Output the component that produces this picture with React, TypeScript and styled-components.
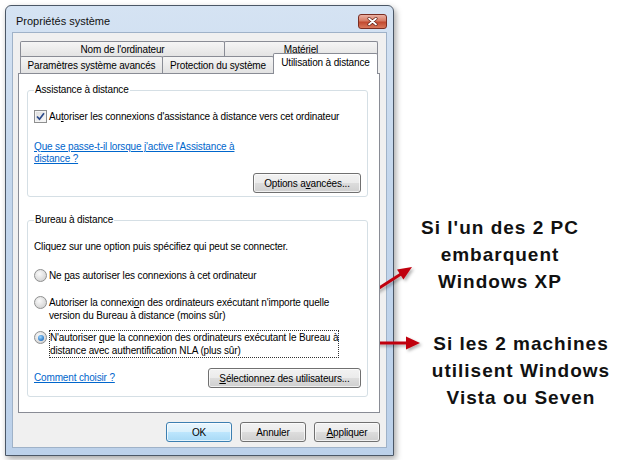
import React from 'react'
import styled, { createGlobalStyle } from 'styled-components'

const RED = '#c0000f'

const GlobalStyle = createGlobalStyle`
  html, body {
    margin: 0;
    padding: 0;
    background: #fff;
  }
  body {
    width: 623px;
    height: 460px;
    overflow: hidden;
    font-family: 'Liberation Sans', Arial, sans-serif;
  }
`

export default function App() {
  return (
    <Page>
      <GlobalStyle />
      <Window>
        <TitleBar>
          <Title>Propriétés système</Title>
          <CloseButton>
            <svg width="11" height="9" viewBox="0 0 11 9">
              <path d="M2 1.5 L9 7.5 M9 1.5 L2 7.5" stroke="#5a1a10" strokeWidth="3" strokeLinecap="round" />
              <path d="M2 1.5 L9 7.5 M9 1.5 L2 7.5" stroke="#fff" strokeWidth="1.8" strokeLinecap="round" />
            </svg>
          </CloseButton>
        </TitleBar>

        <Client>
          <TabArea>
            <TabRow>
              <Tab $width={205}>Nom de l'ordinateur</Tab>
              <Tab $grow>Matériel</Tab>
            </TabRow>
            <FrontRow>
              <Tab $width={143}>Paramètres système avancés</Tab>
              <Tab $width={112}>Protection du système</Tab>
              <Tab $grow $selected>Utilisation à distance</Tab>
            </FrontRow>
          </TabArea>

          <Panel>
            <Group $bottom={3}>
              <Legend>Assistance à distance</Legend>
              <OptionRow $top={14}>
                <CheckBox>
                  <svg width="9" height="9" viewBox="0 0 9 9">
                    <path d="M1 4.5 L3.5 7.2 L8 1.2" fill="none" stroke="#2b4a8a" strokeWidth="1.7" />
                  </svg>
                </CheckBox>
                <Label>
                  Au<u>t</u>oriser les connexions d'assistance à distance vers cet ordinateur
                </Label>
              </OptionRow>
              <Link $top={18}>
                Que se passe-t-il lorsque j'active l'Assistance à
                <br />
                distance ?
              </Link>
              <ActionRow $top={8}>
                <Button $width={108}>
                  Options a<u>v</u>ancées...
                </Button>
              </ActionRow>
            </Group>

            <Group $bottom={8} $top={17}>
              <Legend>Bureau à distance</Legend>
              <Intro>Cliquez sur une option puis spécifiez qui peut se connecter.</Intro>
              <OptionRow $top={16}>
                <Radio />
                <Label>
                  Ne <u>p</u>as autoriser les connexions à cet ordinateur
                </Label>
              </OptionRow>
              <OptionRow $top={14}>
                <Radio />
                <Label>
                  Autoriser la connexi<u>o</u>n des ordinateurs exécutant n'importe quelle
                  <br />
                  version du Bureau à distance (moins sûr)
                </Label>
              </OptionRow>
              <OptionRow $top={9}>
                <Radio $checked />
                <Label $focused>
                  N'autoriser <u>q</u>ue la connexion des ordinateurs exécutant le Bureau à
                  <br />
                  distance avec authentification NLA (plus sûr)
                </Label>
              </OptionRow>
              <ActionRow $top={11} $split>
                <Link>Comment choisir ?</Link>
                <Button $width={153}>
                  <u>S</u>électionnez des utilisateurs...
                </Button>
              </ActionRow>
            </Group>
          </Panel>

          <DialogButtons>
            <Button $width={66} $default>
              OK
            </Button>
            <Button $width={66}>Annuler</Button>
            <Button $width={66}>
              <u>A</u>ppliquer
            </Button>
          </DialogButtons>
        </Client>
      </Window>

      <Notes>
        <Note $left={6}>
          Si l'un des 2 PC
          <br />
          embarquent
          <br />
          Windows XP
        </Note>
        <Note $left={27} $top={35}>
          Si les 2 machines
          <br />
          utilisent Windows
          <br />
          Vista ou Seven
        </Note>
      </Notes>

      <Highlight style={{ left: 28, top: 80, width: 324, height: 52 }} />
      <Highlight style={{ left: 28, top: 293, width: 311, height: 30 }} />
      <Highlight style={{ left: 25, top: 326, width: 326, height: 36 }} />

      <Arrows width="623" height="460" viewBox="0 0 623 460">
        <defs>
          <filter id="arrowShadow" x="-20%" y="-20%" width="140%" height="140%">
            <feDropShadow dx="2" dy="2" stdDeviation="1.5" floodColor="#000" floodOpacity="0.3" />
          </filter>
        </defs>
        <g filter="url(#arrowShadow)" fill={RED} stroke={RED}>
          <line x1="351" y1="306" x2="401" y2="274" strokeWidth="3" />
          <polygon points="412,267 403.4,279.6 397,269.4" stroke="none" />
          <line x1="361" y1="343" x2="408" y2="343" strokeWidth="3" />
          <polygon points="420,343 406,336.5 406,349.5" stroke="none" />
        </g>
      </Arrows>
    </Page>
  )
}

const Page = styled.div`
  position: relative;
  display: flex;
  width: 623px;
  height: 460px;
`

const Window = styled.div`
  box-sizing: border-box;
  display: flex;
  flex-direction: column;
  margin: 5px 0 0 5px;
  width: 389px;
  height: 451px;
  border: 1px solid #4b5766;
  border-radius: 6px 6px 0 0;
  background: linear-gradient(#d5e3f3, #c3d6ec 40%, #bcd1ea);
  box-shadow: 2px 3px 6px rgba(0, 0, 0, 0.35);
`

const TitleBar = styled.div`
  display: flex;
  align-items: center;
  justify-content: space-between;
  height: 26px;
  padding: 4px 6px 0 10px;
  box-sizing: border-box;
`

const Title = styled.div`
  font-size: 11px;
  color: #111;
`

const CloseButton = styled.div`
  display: flex;
  align-items: center;
  justify-content: center;
  width: 29px;
  height: 15px;
  box-sizing: border-box;
  border: 1px solid #7a2d22;
  border-radius: 3px;
  background: linear-gradient(#eab1a4, #d77b64 45%, #c24a30 55%, #d9785c);
`

const Client = styled.div`
  display: flex;
  flex-direction: column;
  box-sizing: border-box;
  flex: 1;
  margin: 0 6px 7px 6px;
  padding: 8px 6px 0 5px;
  background: #f0f0f0;
  border: 1px solid #9fb2c8;
`

const TabArea = styled.div`
  display: flex;
  flex-direction: column;
  padding: 0 2px;
`

const TabRow = styled.div`
  display: flex;
  height: 16px;
`

const FrontRow = styled.div`
  display: flex;
  align-items: flex-end;
  height: 20px;
  margin-top: -4px;
`

const Tab = styled.div<{ $width?: number; $grow?: boolean; $selected?: boolean }>`
  position: relative;
  box-sizing: border-box;
  display: flex;
  align-items: center;
  justify-content: center;
  ${({ $width }) => ($width ? `width: ${$width}px;` : '')}
  ${({ $grow }) => ($grow ? 'flex: 1;' : '')}
  height: ${({ $selected }) => ($selected ? '21px' : '100%')};
  margin-left: -1px;
  &:first-child {
    margin-left: 0;
  }
  ${({ $selected }) => ($selected ? 'margin-bottom: -1px; z-index: 2; padding-bottom: 3px;' : 'max-height: 17px;')}
  border: 1px solid #898c95;
  border-bottom: none;
  border-radius: 2px 2px 0 0;
  background: ${({ $selected }) => ($selected ? '#fff' : 'linear-gradient(#f5f5f5, #e2e2e2)')};
  font-size: 10px;
  letter-spacing: -0.15px;
  color: #000;
  white-space: nowrap;
`

const Panel = styled.div`
  position: relative;
  z-index: 1;
  box-sizing: border-box;
  height: 340px;
  padding: 10px 11px 0 8px;
  border: 1px solid #898c95;
  background: #fff;
`

const Group = styled.fieldset<{ $top?: number; $bottom: number }>`
  display: flex;
  flex-direction: column;
  margin: ${({ $top }) => $top || 0}px 0 0 0;
  padding: 0 6px ${({ $bottom }) => $bottom}px 6px;
  min-width: 0;
  border: 1px solid #d5dfe5;
  border-radius: 3px;
`

const Legend = styled.legend`
  padding: 0 1px;
  font-size: 10px;
  letter-spacing: -0.15px;
  line-height: 12px;
  color: #000;
`

const OptionRow = styled.div<{ $top: number }>`
  display: flex;
  align-items: flex-start;
  gap: 2px;
  margin-top: ${({ $top }) => $top}px;
`

const CheckBox = styled.span`
  display: flex;
  align-items: center;
  justify-content: center;
  flex: none;
  width: 13px;
  height: 13px;
  box-sizing: border-box;
  border: 1px solid #8e8f8f;
  background: linear-gradient(135deg, #dcdcdc, #fbfbfb);
  box-shadow: inset 0 0 0 1px #f4f4f4;
`

const Radio = styled.span<{ $checked?: boolean }>`
  position: relative;
  flex: none;
  width: 13px;
  height: 13px;
  box-sizing: border-box;
  border: 1px solid #8e8f8f;
  border-radius: 50%;
  background: radial-gradient(circle at 40% 35%, #fafafa, #d8d8d8 70%, #c6c6c6);
  &::after {
    content: '';
    display: ${({ $checked }) => ($checked ? 'block' : 'none')};
    position: absolute;
    left: 2.5px;
    top: 2.5px;
    width: 6px;
    height: 6px;
    border-radius: 50%;
    background: radial-gradient(circle at 40% 35%, #9fd8ff, #2a78c8 70%, #1b4f95);
  }
`

const Label = styled.span<{ $focused?: boolean }>`
  font-size: 10px;
  letter-spacing: -0.15px;
  line-height: 13px;
  color: #000;
  white-space: nowrap;
  ${({ $focused }) => ($focused ? 'outline: 1px dotted #333; outline-offset: 0; margin-left: 1px;' : '')}
`

const Link = styled.div<{ $top?: number }>`
  margin-top: ${({ $top }) => $top || 0}px;
  font-size: 10px;
  letter-spacing: -0.15px;
  line-height: 12px;
  color: #0066cc;
  text-decoration: underline;
  white-space: nowrap;
`

const Intro = styled.div`
  margin-top: 15px;
  font-size: 10px;
  letter-spacing: -0.15px;
  line-height: 12px;
  color: #000;
  white-space: nowrap;
`

const ActionRow = styled.div<{ $top: number; $split?: boolean }>`
  display: flex;
  align-items: center;
  justify-content: ${({ $split }) => ($split ? 'space-between' : 'flex-end')};
  margin-top: ${({ $top }) => $top}px;
`

const Button = styled.div<{ $width: number; $default?: boolean }>`
  display: flex;
  align-items: center;
  justify-content: center;
  box-sizing: border-box;
  width: ${({ $width }) => $width}px;
  height: 20px;
  border: 1px solid ${({ $default }) => ($default ? '#3c7fb1' : '#707070')};
  border-radius: 3px;
  background: ${({ $default }) =>
    $default
      ? 'linear-gradient(#eaf6fd 0%, #d9f0fc 50%, #bee6fd 50%, #a7d9f5 100%)'
      : 'linear-gradient(#f2f2f2 0%, #ebebeb 50%, #dddddd 50%, #cfcfcf 100%)'};
  box-shadow: inset 0 0 0 1px rgba(255, 255, 255, 0.7);
  font-size: 10px;
  letter-spacing: -0.15px;
  color: #000;
  white-space: nowrap;
`

const DialogButtons = styled.div`
  display: flex;
  justify-content: flex-end;
  gap: 8px;
  margin-top: 9px;
`

const Notes = styled.div`
  display: flex;
  flex-direction: column;
  flex: 1;
  padding-top: 214px;
`

const Note = styled.div<{ $left: number; $top?: number }>`
  width: 200px;
  margin: ${({ $top }) => $top || 0}px 0 0 ${({ $left }) => $left}px;
  font-family: 'Liberation Sans', Arial, sans-serif;
  font-weight: 700;
  font-size: 19px;
  line-height: 27px;
  letter-spacing: 1px;
  text-align: center;
  color: #111;
`

const Highlight = styled.div`
  position: absolute;
  box-sizing: border-box;
  border: 2px solid ${RED};
  box-shadow: 2px 2px 4px rgba(0, 0, 0, 0.3);
  pointer-events: none;
`

const Arrows = styled.svg`
  position: absolute;
  left: 0;
  top: 0;
  pointer-events: none;
`
